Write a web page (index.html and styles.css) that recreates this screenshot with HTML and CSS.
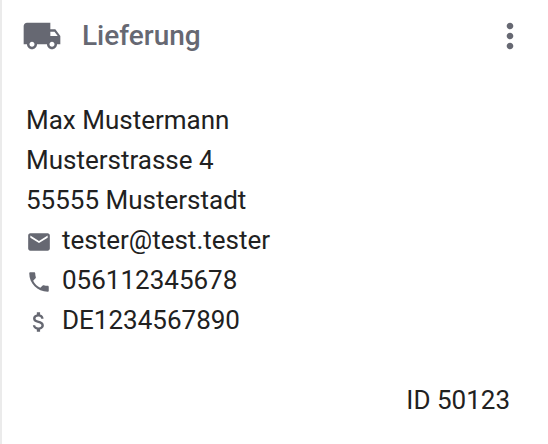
FILE: index.html
```html
<!DOCTYPE html>
<html lang="de">
<head>
<meta charset="utf-8">
<title>Lieferung</title>
<link rel="stylesheet" href="styles.css">
</head>
<body>
<article class="card">
  <header class="card-header">
    <svg class="truck" viewBox="0 0 24 24" aria-hidden="true"><path d="M20 8h-3V4H3c-1.100 0-2 .9-2 2v11h2c0 1.660 1.340 3 3 3s3-1.340 3-3h6c0 1.660 1.340 3 3 3s3-1.340 3-3h2v-5l-3-4zM6 18.500c-.83 0-1.500-.67-1.500-1.500s.67-1.500 1.500-1.500 1.500.67 1.500 1.500-.67 1.500-1.500 1.500zm13.500-9l1.960 2.500H17V9.500h2.500zm-1.500 9c-.83 0-1.500-.67-1.500-1.500s.67-1.500 1.500-1.500 1.500.67 1.500 1.500-.67 1.500-1.500 1.500z"/></svg>
    <h2 class="title">Lieferung</h2>
    <button class="menu" type="button" aria-label="Mehr">
      <svg viewBox="0 0 24 24" aria-hidden="true"><path d="M12 8c1.100 0 2-.9 2-2s-.9-2-2-2-2 .9-2 2 .9 2 2 2zm0 2c-1.100 0-2 .9-2 2s.9 2 2 2 2-.9 2-2-.9-2-2-2zm0 6c-1.100 0-2 .9-2 2s.9 2 2 2 2-.9 2-2-.9-2-2-2z"/></svg>
    </button>
  </header>
  <address class="details">
    <div>Max Mustermann</div>
    <div>Musterstrasse 4</div>
    <div>55555 Musterstadt</div>
    <div class="contact"><svg viewBox="0 0 24 24" aria-hidden="true"><path d="M20 4H4c-1.100 0-1.990.9-1.990 2L2 18c0 1.100.9 2 2 2h16c1.100 0 2-.9 2-2V6c0-1.100-.9-2-2-2zm0 4l-8 5-8-5V6l8 5 8-5v2z"/></svg><span>tester@test.tester</span></div>
    <div class="contact"><svg viewBox="0 0 24 24" aria-hidden="true"><path d="M6.620 10.790c1.440 2.830 3.760 5.140 6.590 6.590l2.200-2.200c.27-.27.67-.36 1.020-.24 1.120.37 2.330.57 3.570.57.55 0 1 .45 1 1V20c0 .55-.45 1-1 1-9.390 0-17-7.610-17-17 0-.55.45-1 1-1h3.500c.55 0 1 .45 1 1 0 1.250.2 2.450.57 3.570.11.35.03.74-.25 1.020l-2.200 2.200z"/></svg><span>056112345678</span></div>
    <div class="contact"><svg viewBox="0 0 24 24" aria-hidden="true"><path d="M11.800 10.900c-2.270-.59-3-1.200-3-2.150 0-1.090 1.010-1.850 2.700-1.850 1.780 0 2.440.85 2.500 2.100h2.210c-.07-1.720-1.120-3.300-3.210-3.810V3h-3v2.160c-1.940.42-3.500 1.680-3.500 3.610 0 2.310 1.910 3.460 4.700 4.130 2.500.6 3 1.480 3 2.410 0 .69-.49 1.790-2.700 1.790-2.060 0-2.870-.92-2.980-2.100h-2.200c.12 2.190 1.760 3.420 3.680 3.830V21h3v-2.150c1.950-.37 3.500-1.500 3.500-3.550 0-2.840-2.430-3.810-4.700-4.400z"/></svg><span>DE1234567890</span></div>
  </address>
  <footer class="card-footer">ID 50123</footer>
</article>
</body>
</html>
```
FILE: styles.css
```css
* {
  box-sizing: border-box;
}

body {
  margin: 0;
  background: #fff;
  color: #212121;
  font: 26px/40px Roboto, sans-serif;
}

.card {
  min-height: 100vh;
  padding: 12px 18px 24px 20px;
  border-left: 2px solid #ebebeb;
}

svg {
  display: block;
  fill: #666872;
}

.card-header {
  display: flex;
  align-items: center;
  height: 48px;
}

.truck {
  width: 40px;
  height: 40px;
}

.title {
  flex: 1;
  margin: 0 0 0 20px;
  color: #666872;
  font-size: 28px;
  font-weight: 500;
}

.menu {
  padding: 0;
  border: 0;
  background: none;
}

.menu svg {
  width: 40px;
  height: 40px;
}

.details {
  margin: 40px 0 0 4px;
  font-style: normal;
}

.contact {
  display: flex;
  align-items: center;
  gap: 10px;
}

.contact svg {
  width: 26px;
  height: 26px;
  margin-top: 4px;
}

.card-footer {
  margin: 40px 20px 0 0;
  text-align: right;
}
```
